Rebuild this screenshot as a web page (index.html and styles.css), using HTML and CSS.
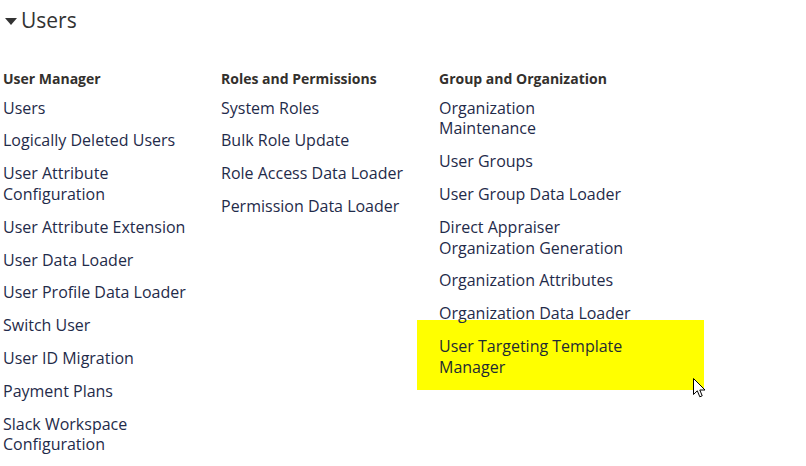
FILE: index.html
```html
<!DOCTYPE html>
<html>
<head>
<meta charset="utf-8">
<link rel="stylesheet" href="styles.css">
</head>
<body>
<div class="page">
  <h2 class="title"><span class="caret"></span>Users</h2>
  <div class="columns">
    <div class="col">
      <h3 class="col-head">User Manager</h3>
      <ul class="links">
        <li>Users</li>
        <li>Logically Deleted Users</li>
        <li>User Attribute Configuration</li>
        <li>User Attribute Extension</li>
        <li>User Data Loader</li>
        <li>User Profile Data Loader</li>
        <li>Switch User</li>
        <li>User ID Migration</li>
        <li>Payment Plans</li>
        <li>Slack Workspace Configuration</li>
      </ul>
    </div>
    <div class="col">
      <h3 class="col-head">Roles and Permissions</h3>
      <ul class="links">
        <li>System Roles</li>
        <li>Bulk Role Update</li>
        <li>Role Access Data Loader</li>
        <li>Permission Data Loader</li>
      </ul>
    </div>
    <div class="col">
      <h3 class="col-head">Group and Organization</h3>
      <ul class="links">
        <li>Organization Maintenance</li>
        <li>User Groups</li>
        <li>User Group Data Loader</li>
        <li>Direct Appraiser Organization Generation</li>
        <li>Organization Attributes</li>
        <li>Organization Data Loader</li>
        <li class="hover">User Targeting Template Manager</li>
      </ul>
    </div>
  </div>
  <svg class="cursor" width="14" height="21" viewBox="0 0 14 21">
    <path d="M0.5 0.5 L0.5 16.5 L4.3 12.8 L6.8 18.8 L9.2 17.8 L6.8 12 L12 12 Z" fill="#fff" stroke="#000" stroke-width="1" stroke-linejoin="miter"/>
  </svg>
</div>
</body>
</html>
```
FILE: styles.css
```css
html, body {
  margin: 0;
  padding: 0;
  background: #fff;
}
.page {
  position: relative;
  width: 806px;
  height: 466px;
  overflow: hidden;
  font-family: "Open Sans", "Liberation Sans", sans-serif;
}
.title {
  margin: 0;
  padding: 6px 0 0 5px;
  height: 28px;
  display: flex;
  align-items: center;
  font-size: 21px;
  line-height: 28px;
  font-weight: 400;
  color: #333;
}
.caret {
  width: 0;
  height: 0;
  border-left: 6px solid transparent;
  border-right: 6px solid transparent;
  border-top: 7px solid #333;
  margin: 2px 4px 0 0;
}
.columns {
  display: grid;
  grid-template-columns: 195px 195px 195px;
  column-gap: 23px;
  padding: 35px 0 0 3px;
}
.col-head {
  margin: 0;
  font-size: 14px;
  line-height: 20px;
  font-weight: 700;
  color: #33302d;
}
.links {
  list-style: none;
  margin: 2.6px 0 0;
  padding: 0;
}
.links li {
  font-size: 16px;
  line-height: 20.8px;
  padding: 6px 0;
  color: #1f2b4a;
}
.links li.hover {
  background: #ffff00;
  margin: -10px -70px 0 -22px;
  padding: 16px 70px 12.4px 22px;
  color: #1f2b33;
}
.cursor {
  position: absolute;
  left: 692.5px;
  top: 377.5px;
}
```
